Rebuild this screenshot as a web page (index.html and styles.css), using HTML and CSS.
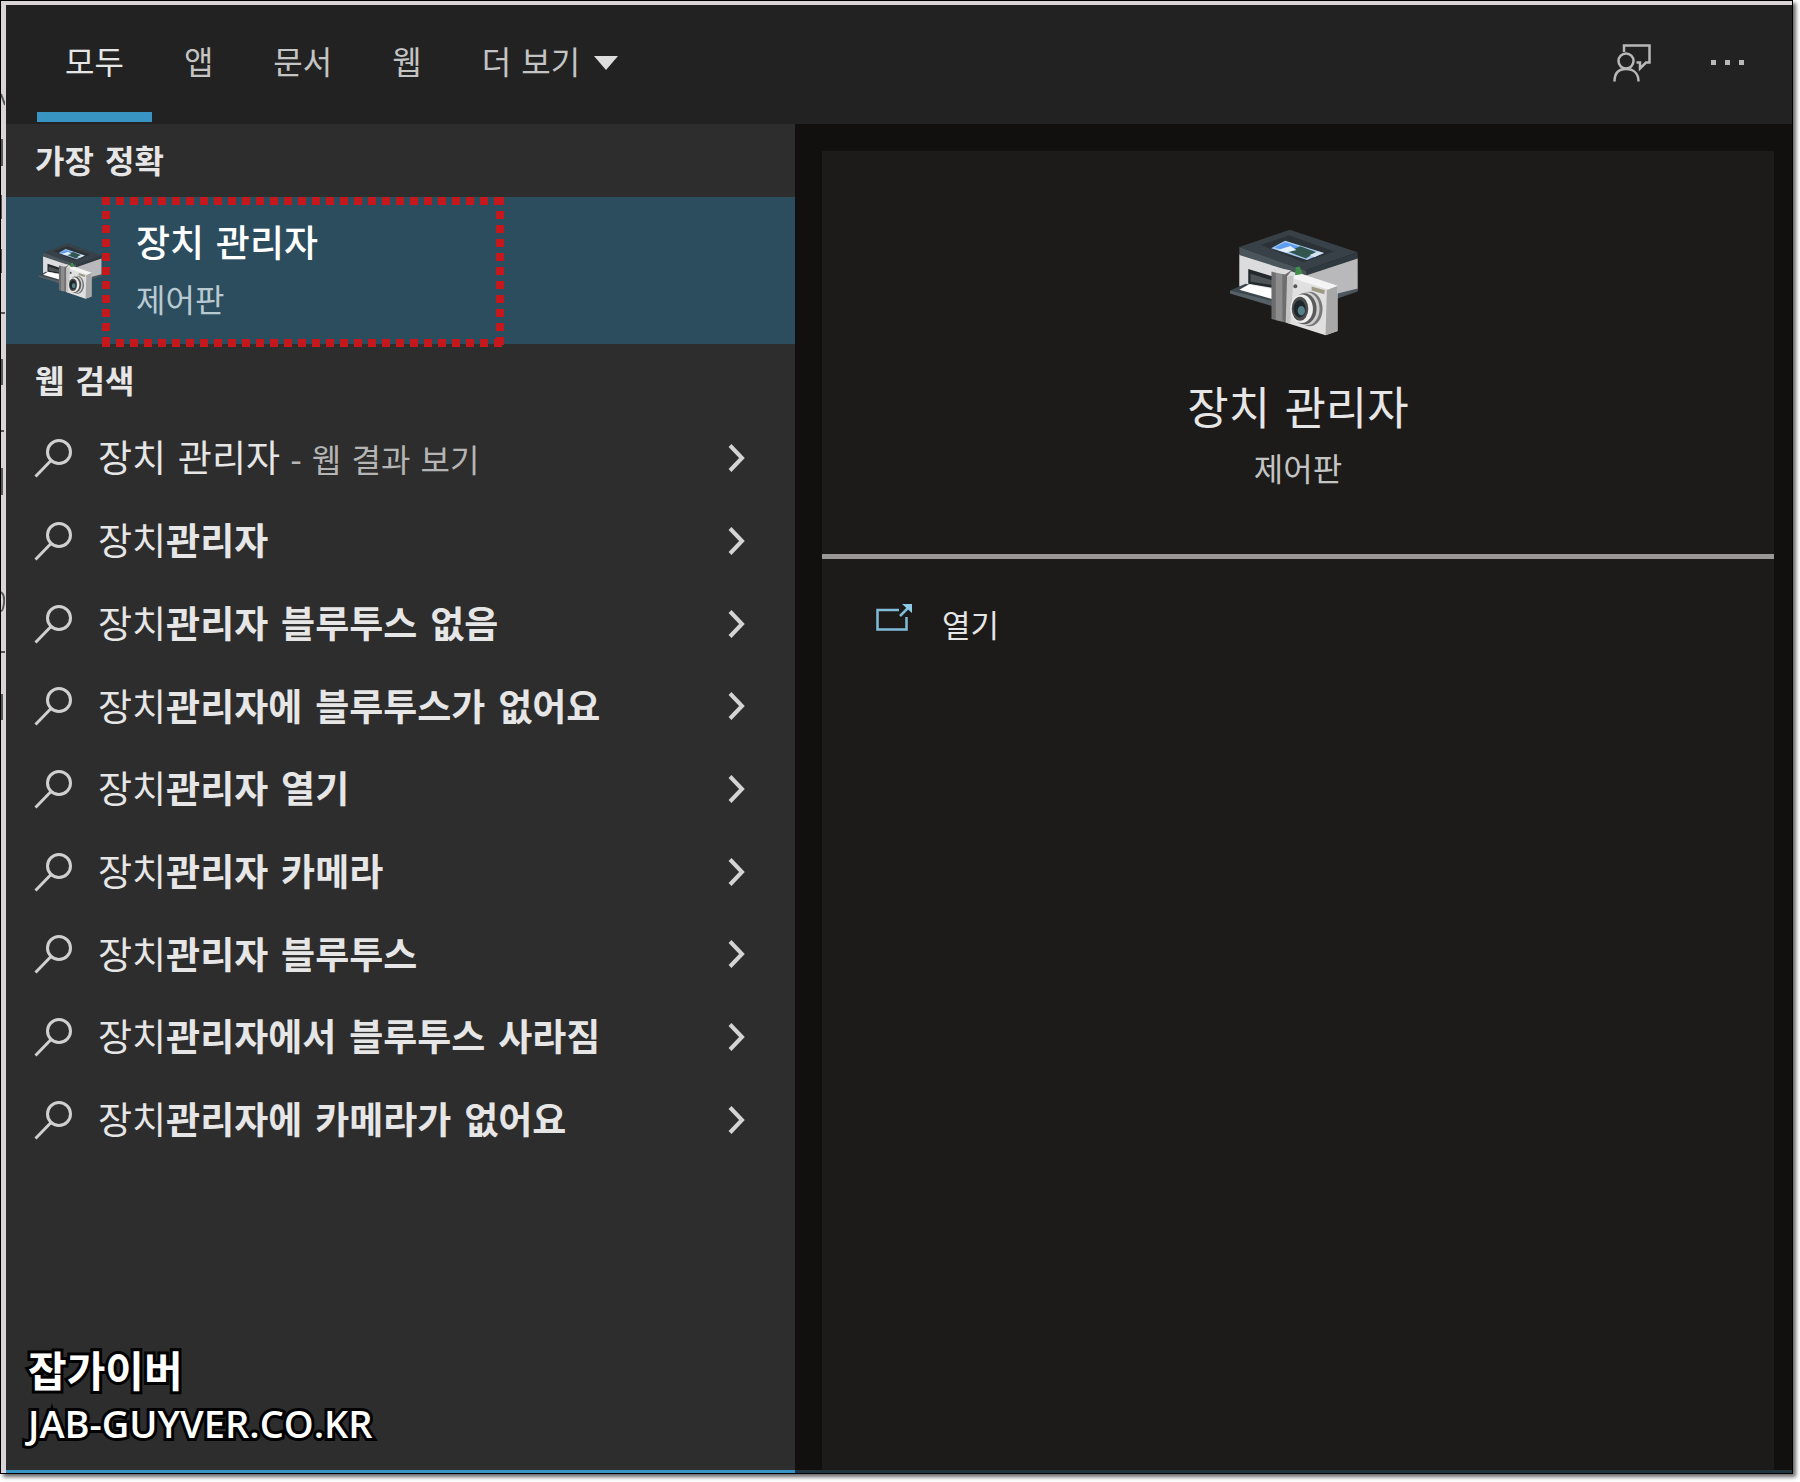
FILE: index.html
```html
<!DOCTYPE html>
<html lang="ko">

<head>
    <meta charset="UTF-8">
    <meta name="viewport" content="width=device-width, initial-scale=1.0">
    <title>장치 관리자 - 검색</title>
    <link rel="stylesheet" href="styles.css">
</head>

<body>
    <!-- shared icons -->
    <svg class="sprite" aria-hidden="true">
        <symbol id="icon-search" viewBox="0 0 40 40">
            <circle cx="25" cy="14" r="11.5" fill="none" stroke="currentColor" stroke-width="3"/>
            <path d="M17 22.500 1.500 38.500" fill="none" stroke="currentColor" stroke-width="3"/>
        </symbol>
        <symbol id="icon-chevron" viewBox="0 0 18 28">
            <path d="M2 1.500 14 14 2 26.500" fill="none" stroke="currentColor" stroke-width="4"/>
        </symbol>
        <symbol id="icon-device" viewBox="115 85 416 322" preserveAspectRatio="none">
            <path d="M330 215 503 172 503 268 440 292 330 300Z" fill="#b9b9bb"/>
            <path d="M440 280 503 264 503 273 440 295Z" fill="#4b555c"/>
            <path d="M146 160 330 212 330 300 146 258Z" fill="#dcdcde"/>
            <path d="M173 205 248 228 248 262 173 250Z" fill="#22282c"/>
            <path d="M180 220 246 240 246 254 180 244Z" fill="#4d5356"/>
            <path d="M118 270 165 250 250 268 250 316Z" fill="#3c464d"/>
            <path d="M146 268 176 251 250 266 250 297Z" fill="#fff"/>
            <path d="M118 270 250 303 250 318 118 279Z" fill="#566067"/>
            <path d="M146 139 298 87 503 155 345 210Z" fill="#384147"/>
            <path d="M146 139 345 210 345 226 146 163Z" fill="#4a545b"/>
            <path d="M345 210 503 155 503 174 345 226Z" fill="#30393f"/>
            <path d="M210 133 296 104 432 153 340 185Z" fill="#2b3338"/>
            <path d="M242 143 284 120 402 157 350 178Z" fill="#a8c8ef"/>
            <path d="M252 141 284 125 330 139 292 153Z" fill="#5d9df0"/>
            <path d="M292 153 330 137 377 154 347 174Z" fill="#32564f"/>
            <path d="M262 148 300 136 318 148 288 156Z" fill="#e4f0fc"/>
            <path d="M358 163 384 153 400 157 372 170Z" fill="#d5e4ef"/>
            <path d="M316 200 328 198 340 228 314 228Z" fill="#3f8d48"/>
            <path d="M243 214 276 204 302 212 290 228 290 368 243 356Z" fill="#6e6e6e"/>
            <path d="M256 216 276 214 276 363 256 359Z" fill="#8d8d8d"/>
            <path d="M243 214 272 204 302 210 284 222Z" fill="#dedede"/>
            <path d="M290 228 336 221 442 256 442 392 406 405 290 368Z" fill="#e0e0e0"/>
            <path d="M410 268 442 256 442 392 406 405Z" fill="#a8a8a8"/>
            <path d="M290 228 336 221 442 256 414 267Z" fill="#f4f4f4"/>
            <path d="M290 228 310 224 300 370 286 366Z" fill="#c5c5c5"/>
            <path d="M364 258 404 269 402 281 364 270Z" fill="#9c9a82"/>
            <circle cx="315" cy="257" r="6" fill="#555"/>
            <ellipse cx="358" cy="326" rx="39" ry="52" fill="#777"/>
            <ellipse cx="350" cy="325" rx="38" ry="50" fill="#cfcfcf"/>
            <ellipse cx="342" cy="325" rx="37" ry="47" fill="#5b5b5b"/>
            <ellipse cx="334" cy="325" rx="34" ry="43" fill="#ededed"/>
            <ellipse cx="329" cy="325" rx="25" ry="36" fill="#4c4c4c"/>
            <ellipse cx="328" cy="325" rx="18" ry="26" fill="#1d272b"/>
            <ellipse cx="333" cy="331" rx="11" ry="14" fill="#558089"/>
        </symbol>
    </svg>

    <div class="window">
        <!-- bits of the window behind, showing along the left edge -->
        <svg class="behind" width="4" height="730" viewBox="0 0 4 730" aria-hidden="true">
            <path d="M0 93 4 104M1 138V165M0 194V218M0 248V272M0 312H4M1 358V384M0 430H3M1 467V494M0 591Q4 594 3 602T0 610M0 651H4M1 693V719" stroke="#555" stroke-width="2" fill="none"/>
        </svg>

        <div class="header">
            <nav class="tabs">
                <button class="tab active">모두</button>
                <button class="tab">앱</button>
                <button class="tab">문서</button>
                <button class="tab">웹</button>
                <button class="tab">더 보기
                    <svg class="caret" viewBox="0 0 24 14"><path d="M0 0H24L12 14Z" fill="currentColor"/></svg>
                </button>
            </nav>
            <div class="actions">
                <button class="action" aria-label="피드백">
                    <svg width="38" height="38" viewBox="0 0 38 38" fill="none" stroke="currentColor" stroke-width="2.500">
                        <path d="M11 8V1.500H36.500V18.500H33L27 24.500V18.500H23.500"/>
                        <circle cx="13" cy="17" r="7.500"/>
                        <path d="M1.500 37.500C1.500 29 6 25 13 25S25.500 29 25.500 37.500"/>
                    </svg>
                </button>
                <button class="action" aria-label="옵션">
                    <svg width="34" height="5" viewBox="0 0 34 5" fill="currentColor">
                        <path d="M0 0h5v5H0zM14 0h5v5h-5zM28 0h5v5h-5z"/>
                    </svg>
                </button>
            </div>
        </div>

        <div class="content">
            <div class="results">
                <h2 class="section-title">가장 정확</h2>
                <a class="best-match" href="#">
                    <svg class="device-small"><use href="#icon-device"/></svg>
                    <span class="best-text">
                        <span class="best-name">장치 관리자</span>
                        <span class="best-type">제어판</span>
                    </span>
                    <!-- red dotted marker -->
                    <svg class="marker" viewBox="0 0 402 150" fill="none">
                        <path d="M0 4H402M0 146H402M4 0V150M398 0V150"/>
                    </svg>
                </a>

                <h2 class="section-title">웹 검색</h2>
                <ul class="search-list">
                    <li><a href="#"><svg class="search"><use href="#icon-search"/></svg><span>장치 관리자<small> - 웹 결과 보기</small></span><svg class="chevron"><use href="#icon-chevron"/></svg></a></li>
                    <li><a href="#"><svg class="search"><use href="#icon-search"/></svg><span>장치<b>관리자</b></span><svg class="chevron"><use href="#icon-chevron"/></svg></a></li>
                    <li><a href="#"><svg class="search"><use href="#icon-search"/></svg><span>장치<b>관리자 블루투스 없음</b></span><svg class="chevron"><use href="#icon-chevron"/></svg></a></li>
                    <li><a href="#"><svg class="search"><use href="#icon-search"/></svg><span>장치<b>관리자에 블루투스가 없어요</b></span><svg class="chevron"><use href="#icon-chevron"/></svg></a></li>
                    <li><a href="#"><svg class="search"><use href="#icon-search"/></svg><span>장치<b>관리자 열기</b></span><svg class="chevron"><use href="#icon-chevron"/></svg></a></li>
                    <li><a href="#"><svg class="search"><use href="#icon-search"/></svg><span>장치<b>관리자 카메라</b></span><svg class="chevron"><use href="#icon-chevron"/></svg></a></li>
                    <li><a href="#"><svg class="search"><use href="#icon-search"/></svg><span>장치<b>관리자 블루투스</b></span><svg class="chevron"><use href="#icon-chevron"/></svg></a></li>
                    <li><a href="#"><svg class="search"><use href="#icon-search"/></svg><span>장치<b>관리자에서 블루투스 사라짐</b></span><svg class="chevron"><use href="#icon-chevron"/></svg></a></li>
                    <li><a href="#"><svg class="search"><use href="#icon-search"/></svg><span>장치<b>관리자에 카메라가 없어요</b></span><svg class="chevron"><use href="#icon-chevron"/></svg></a></li>
                </ul>

                <div class="watermark">
                    <div class="watermark-name">잡가이버</div>
                    <div class="watermark-url">JAB-GUYVER.CO.KR</div>
                </div>
            </div>

            <div class="preview">
                <div class="card">
                    <div class="card-top">
                        <svg class="device-large"><use href="#icon-device"/></svg>
                        <h1>장치 관리자</h1>
                        <p>제어판</p>
                    </div>
                    <a class="open" href="#">
                        <svg width="36" height="28" viewBox="0 0 36 28" fill="none" stroke="#7fbcd8" stroke-width="2.500">
                            <path d="M23 6H1.500V25.500H30.500V13"/>
                            <path d="M24 12 33 3"/>
                            <path d="M26 0H36V9Z" fill="#8fcbe6" stroke="none"/>
                        </svg>
                        열기
                    </a>
                </div>
            </div>
        </div>
    </div>
</body>

</html>
```

FILE: styles.css
```css
* {
    box-sizing: border-box;
}

body {
    margin: 0;
    padding: 0 7px 8px 0;
    min-height: 100vh;
    display: flex;
    background-color: #fff;
    font-family: "DejaVu Sans", "Noto Sans CJK KR", sans-serif;
    color: #e6e6e6;
}

.sprite {
    position: absolute;
    width: 0;
    height: 0;
}

svg {
    flex-shrink: 0;
}

a {
    color: inherit;
    text-decoration: none;
}

button {
    font: inherit;
    color: inherit;
    background: none;
    border: none;
    padding: 0;
    cursor: pointer;
}

.window {
    position: relative;
    flex: 1;
    display: flex;
    flex-direction: column;
    padding: 4px 0 0 5px;
    background-color: #d9d5d6;
    border: 1px solid #000;
    box-shadow: 3px 3px 4px rgba(0, 0, 0, 0.6);
}

.behind {
    position: absolute;
    left: 0;
    top: 0;
}

/* header */
.header {
    height: 119px;
    display: flex;
    justify-content: space-between;
    background-color: #222;
}

.tabs {
    display: flex;
    gap: 4px;
    margin-left: 31px;
}

.tab {
    display: flex;
    align-items: center;
    gap: 14px;
    padding: 0 28px 3px;
    font-size: 32px;
    line-height: 40px;
    color: #c4c4c4;
}

.tab.active {
    position: relative;
    color: #e6e6e6;
}

.tab.active::after {
    content: "";
    position: absolute;
    left: 0;
    right: 0;
    bottom: 2px;
    height: 10px;
    background-color: #3794c3;
}

.caret {
    width: 24px;
    height: 14px;
    color: #ddd;
}

.actions {
    display: flex;
    align-items: center;
    gap: 60px;
    padding: 0 47px 4px 0;
    color: #b8b8b8;
}

.action {
    display: flex;
}

/* body */
.content {
    flex: 1;
    display: grid;
    grid-template-columns: 789fr 997fr;
}

.results {
    display: flex;
    flex-direction: column;
    background-color: #2d2d2d;
    border-bottom: 3px solid #3794c3;
}

.section-title {
    margin: 0;
    padding: 4px 29px 0;
    font-size: 32px;
    line-height: 69px;
    font-weight: bold;
}

.best-match {
    position: relative;
    height: 147px;
    display: flex;
    align-items: center;
    gap: 30px;
    padding-left: 32px;
    background-color: #2c4d5e;
}

.device-small {
    width: 68px;
    height: 56px;
}

.best-text {
    display: flex;
    flex-direction: column;
    gap: 12px;
    padding-top: 4px;
}

.best-name {
    font-size: 37px;
    line-height: 44px;
    font-weight: 500;
    color: #fff;
}

.best-type {
    font-size: 32px;
    line-height: 44px;
    color: #b9c9d1;
}

.marker {
    position: absolute;
    left: 96px;
    top: 0;
    width: 402px;
    height: 150px;
    stroke: #c5181c;
    stroke-width: 8;
    stroke-dasharray: 8 6;
}

.search-list {
    list-style: none;
    margin: 0;
    padding: 0;
    min-height: 744px;
    display: grid;
    grid-auto-rows: 1fr;
}

.search-list a {
    height: 100%;
    display: flex;
    align-items: center;
    padding: 0 49px 0 28px;
    font-size: 37px;
    line-height: 44px;
}

.search {
    width: 40px;
    height: 40px;
    margin-right: 24px;
    color: #d0d0d0;
}

.search-list span {
    flex: 1;
    padding-top: 5px;
    white-space: nowrap;
}

.search-list small {
    font-size: 32px;
    color: #b5b5b5;
}

.chevron {
    width: 18px;
    height: 28px;
    color: #d4d4d4;
}

.watermark {
    margin-top: auto;
    padding: 0 22px 22px;
    color: #fff;
    -webkit-text-stroke: 6px #000;
    paint-order: stroke fill;
}

.watermark-name {
    font-size: 42px;
    line-height: 50px;
    font-weight: bold;
}

.watermark-url {
    font-family: "Open Sans", "Noto Sans", sans-serif;
    font-size: 38px;
    line-height: 50px;
    font-weight: 600;
}

/* preview */
.preview {
    display: flex;
    padding: 27px 18px 0 27px;
    background-color: #11100e;
    border-bottom: 3px solid #203540;
}

.card {
    flex: 1;
    background-color: #1c1b19;
}

.card-top {
    height: 408px;
    padding-top: 78px;
    text-align: center;
    border-bottom: 5px solid #9b9797;
}

.device-large {
    width: 138px;
    height: 107px;
}

.card-top h1 {
    margin: 40px 0 0;
    font-size: 45px;
    line-height: 60px;
    font-weight: normal;
}

.card-top p {
    margin: 8px 0 0;
    font-size: 32px;
    line-height: 44px;
    color: #c4c4c4;
}

.open {
    display: flex;
    align-items: flex-start;
    gap: 30px;
    padding: 45px 54px;
    font-size: 31px;
    line-height: 44px;
}
```
